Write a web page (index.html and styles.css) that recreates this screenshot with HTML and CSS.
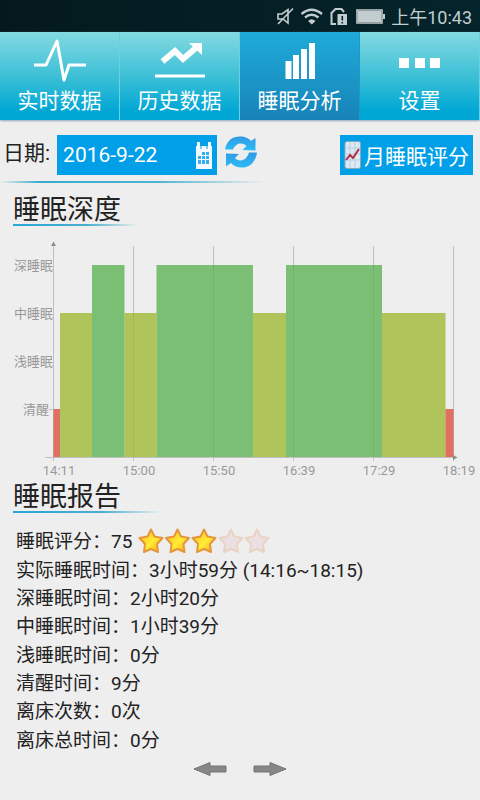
FILE: index.html
```html
<!DOCTYPE html>
<html lang="zh-CN">
<head>
<meta charset="utf-8">
<meta name="viewport" content="width=device-width, initial-scale=1">
<title>睡眠分析</title>
<link rel="stylesheet" href="styles.css">
</head>
<body>
<header class="status">
  <svg width="108" height="20" viewBox="0 0 108 20" aria-hidden="true">
    <g fill="none" stroke="#c3cdcf" stroke-width="1.6">
      <path d="M1 8h4l6-4.500v13.500l-5-4H1zM1 18 16 2.500"/>
      <path d="M24.500 8q10-8.500 20.500 0M28 11.500q6.500-5.500 13.500 0" stroke-width="2.400"/>
      <path d="M59 18h-4.500V7l4-4h6l2.500 3" stroke-width="2"/>
      <path d="M80 4h25v13H80z"/>
    </g>
    <path fill="#c3cdcf" d="M31 15q3.500-3.500 7.500 0l-3.700 3.500zM60.500 8H70v11h-9.500zM81 5h23v11H81zM106 8h2v5h-2z"/>
    <path fill="#04222a" d="M64.500 10h1.600v4.500h-1.600zM64.500 16h1.600v1.500h-1.600z"/>
  </svg>
  <time>上午10:43</time>
</header>

<nav class="tabs">
  <a class="tab" href="#live">
    <svg width="56" height="46" viewBox="0 0 56 46" aria-hidden="true"><path d="M2 26h12L25 2l7 39 5-15h17" fill="none" stroke="#fff" stroke-width="3" stroke-linejoin="round"/></svg>
    <span>实时数据</span>
  </a>
  <a class="tab" href="#history">
    <svg width="56" height="46" viewBox="0 0 56 46" aria-hidden="true"><path d="M3 37h50" stroke="#fff" stroke-width="3"/><path d="M10.500 22.500 23 12l8 8L45 8" fill="none" stroke="#fff" stroke-width="6"/><path d="M37 4h13v12z" fill="#fff"/></svg>
    <span>历史数据</span>
  </a>
  <a class="tab active" href="#sleep" aria-current="page">
    <svg width="56" height="46" viewBox="0 0 56 46" aria-hidden="true"><path d="M13.500 22h6v18h-6zM21 16h6v24h-6zM29 10h6v30h-6zM37 4h6v36h-6z" fill="#fff"/></svg>
    <span>睡眠分析</span>
  </a>
  <a class="tab" href="#settings">
    <svg width="56" height="46" viewBox="0 0 56 46" aria-hidden="true"><path d="M7 19h10v10H7zM23 19h10v10H23zM38 19h10v10H38z" fill="#fff"/></svg>
    <span>设置</span>
  </a>
</nav>

<main>
  <form class="toolbar">
    <label for="date">日期:</label>
    <div class="date-box">
      <input id="date" type="text" value="2016-9-22">
      <button type="button" class="icon" aria-label="选择日期">
        <svg width="16" height="28" viewBox="0 0 16 28"><path d="M0 5h16v23H0z" fill="#f2faff"/><path d="M1 1h3v5H1zM12 1h3v5h-3z" fill="#f2faff"/><path d="M4.500 4h1v4h-1zM10.500 4h1v4h-1z" fill="#009fe8"/><path d="M5 11h8v12H2v-8h3z" fill="#36aff0"/><path d="M2 14.500h12M2 18.500h12M5.500 11v12M9.500 11v12" stroke="#f2faff" stroke-width="1"/></svg>
      </button>
    </div>
    <button type="button" class="icon refresh" aria-label="刷新">
      <svg width="34" height="34" viewBox="0 0 34 34">
        <defs><linearGradient id="blue" x2="0" y2="1"><stop stop-color="#2f9ae2"/><stop offset="1" stop-color="#2dbcf8"/></linearGradient></defs>
        <path fill="url(#blue)" d="M1 14.500C2.500 6 8 1.500 16 1.500c5 0 9 2 11 4.500L31.500 3v12.500l-13-.5 4-4C20 7.500 12 6.500 9 14.500z"/>
        <path fill="url(#blue)" d="M33 17.500C31.500 27 26 32.500 18 32.500c-5 0-9-2-11-4.500L2 31.500V18.500l13 .5-4 4c3 4 11 4 14-5.500z"/>
      </svg>
    </button>
    <button type="button" class="month">
      <svg width="18" height="30" viewBox="0 0 18 30" aria-hidden="true"><rect x="1" y="1.500" width="15.500" height="27" rx="2" fill="#dfe9f2" stroke="#88a8c0"/><path d="M1 8h15M1 14h15M1 20h15M6 2v26M11 2v26" stroke="#b5cee3"/><path d="m2 20 4-5 3 3 6-9" fill="none" stroke="#b52c42" stroke-width="2"/></svg>
      月睡眠评分
    </button>
  </form>
  <hr class="rule">

  <section class="depth">
    <h2>睡眠深度</h2>
    <svg class="chart" viewBox="0 0 480 240" role="img" aria-label="睡眠深度">
      <path class="grid" d="M53.500 7v216M133.500 8v215M213.500 8v215M293.500 8v215M373.500 8v215M453.500 8v215M49 171.500h5"/>
      <path class="deep" d="M92 27h32.500v192H92zM156.500 27H253v192h-96.500zM286 27h96v192h-96z"/>
      <path class="middle" d="M60 75h32v144H60zM124.500 75h32v144h-32zM253 75h33v144h-33zM382 75h63.500v144H382z"/>
      <path class="awake" d="M53.500 171H60v48h-6.500zM445.500 171h8v48h-8z"/>
      <path class="grid" d="M45 219.500h410"/>
      <path class="tips" d="m51 8 2.500-4.500L56 8zM453 217l4.500 2.500-4.500 2.500z"/>
      <g class="levels">
        <text x="53" y="32">深睡眠</text>
        <text x="53" y="80">中睡眠</text>
        <text x="53" y="128">浅睡眠</text>
        <text x="49" y="176">清醒</text>
      </g>
      <g class="times">
        <text x="59" y="237">14:11</text>
        <text x="139" y="237">15:00</text>
        <text x="219" y="237">15:50</text>
        <text x="299" y="237">16:39</text>
        <text x="379" y="237">17:29</text>
        <text x="459" y="237">18:19</text>
      </g>
    </svg>
  </section>

  <section class="report">
    <h2>睡眠报告</h2>
    <dl>
      <div><dt>睡眠评分：</dt><dd>75</dd><dd class="stars">
        <svg width="132" height="26" viewBox="0 0 132 26" role="img" aria-label="3/5">
          <defs>
            <linearGradient id="gold" x2="1" y2="1"><stop offset=".2" stop-color="#ffc928"/><stop offset=".55" stop-color="#ffed35"/><stop offset="1" stop-color="#fa9c18"/></linearGradient>
            <path id="star" d="m13 1.500 3.500 7 8 1.500-5.500 6 1 8-7-3-7 3 1-8L1.500 10l8-1.500z" stroke-width="2" stroke-linejoin="round"/>
          </defs>
          <g fill="url(#gold)" stroke="#e5963a"><use href="#star"/><use href="#star" x="26.500"/><use href="#star" x="53"/></g>
          <g fill="#ebe0e1" stroke="#ead3c4"><use href="#star" x="80"/><use href="#star" x="106"/></g>
        </svg>
      </dd></div>
      <div><dt>实际睡眠时间：</dt><dd>3小时59分 (14:16~18:15)</dd></div>
      <div><dt>深睡眠时间：</dt><dd>2小时20分</dd></div>
      <div><dt>中睡眠时间：</dt><dd>1小时39分</dd></div>
      <div><dt>浅睡眠时间：</dt><dd>0分</dd></div>
      <div><dt>清醒时间：</dt><dd>9分</dd></div>
      <div><dt>离床次数：</dt><dd>0次</dd></div>
      <div><dt>离床总时间：</dt><dd>0分</dd></div>
    </dl>
  </section>
</main>

<footer class="pager">
  <button type="button" class="icon" aria-label="上一天"><svg width="34" height="16" viewBox="0 0 34 16"><path d="M1 8 17 1.500V5h16v6H17v3.500z" fill="#878787" stroke="#747474"/></svg></button>
  <button type="button" class="icon" aria-label="下一天"><svg width="34" height="16" viewBox="0 0 34 16"><path d="M33 8 17 1.500V5H1v6h16v3.500z" fill="#878787" stroke="#747474"/></svg></button>
</footer>
</body>
</html>
```
FILE: styles.css
```css
* { box-sizing: border-box; }

body {
  margin: 0;
  min-height: 100vh;
  display: flex;
  flex-direction: column;
  background: #eee;
  color: #222;
  font-family: Roboto, "Noto Sans CJK SC", sans-serif;
  font-size: 19px;
}

button, input {
  margin: 0;
  padding: 0;
  border: 0;
  background: none;
  color: inherit;
  font: inherit;
}

svg { display: block; flex: none; }

.icon { display: flex; }

.status {
  height: 32px;
  display: flex;
  align-items: center;
  justify-content: flex-end;
  gap: 6px;
  padding-right: 8px;
  background: linear-gradient(90deg, #04191d, #04242b);
  color: #c3cdcf;
  font-size: 18px;
}

.tabs {
  display: grid;
  grid-template-columns: repeat(4, 1fr);
  box-shadow: 0 1px 2px #8fa4bd;
}

.tab {
  height: 88px;
  display: flex;
  flex-direction: column;
  align-items: center;
  padding-top: 7px;
  border-right: 1px solid #6bd0e2;
  background: linear-gradient(#83dae0, #36bdd6 55%, #00a7d5 90%);
  color: #fff;
  font-size: 21px;
  line-height: 32px;
  text-decoration: none;
}

.tab.active {
  border-color: #2099c8;
  background: linear-gradient(#1fabd9, #1783b8);
}

.toolbar {
  display: flex;
  align-items: center;
  gap: 7px;
  padding: 15px 7px 6px 3px;
  font-size: 21px;
}

.toolbar label { padding-bottom: 8px; }

.date-box {
  width: 160px;
  height: 40px;
  display: flex;
  align-items: center;
  padding: 0 5px 0 6px;
  background: #009fe8;
  color: #fff;
}

.date-box input { flex: 1; min-width: 0; }

.refresh { padding-bottom: 6px; }

.month {
  height: 40px;
  margin-left: auto;
  display: flex;
  align-items: center;
  gap: 2px;
  padding: 0 4px;
  background: #009fe8;
  color: #fff;
}

.rule {
  width: 55%;
  height: 2px;
  margin: 0;
  border: 0;
  background: linear-gradient(90deg, transparent, #3aaccb 15%, #4db4d0 60%, transparent);
}

main {
  flex: 1;
  display: flex;
  flex-direction: column;
}

h2 {
  align-self: flex-start;
  margin: 0 0 0 13px;
  padding: 5px 16px 0 0;
  border-bottom: 2px solid;
  border-image: linear-gradient(90deg, #28a7d8, #49afd0 60%, transparent) 1;
  font-size: 27px;
  font-weight: 400;
  line-height: 28px;
}

.depth, .report { display: flex; flex-direction: column; }

.depth h2 { margin-top: 8px; }

.chart { width: 100%; margin-top: 12px; }

.deep { fill: #53af4a; }
.middle { fill: #99b62a; }
.awake { fill: #db4631; }
.deep, .middle, .awake { fill-opacity: .75; }
.grid { fill: none; stroke: #c0c0c0; }
.tips { fill: #8c8c8c; }
.levels, .times { fill: #999; font-size: 13px; }
.levels { text-anchor: end; }
.times { text-anchor: middle; }

.report { flex: 1; }

.report h2 { padding-right: 40px; }

dl {
  flex: 1;
  display: grid;
  grid-auto-rows: 1fr;
  margin: 15px 16px 0;
}

dl div { display: flex; align-items: center; line-height: 28px; }

dd { margin: 0; }

.stars { margin-left: 6px; padding-bottom: 2px; }

.pager {
  display: flex;
  justify-content: center;
  gap: 26px;
  padding: 6px 0 23px;
}
```
